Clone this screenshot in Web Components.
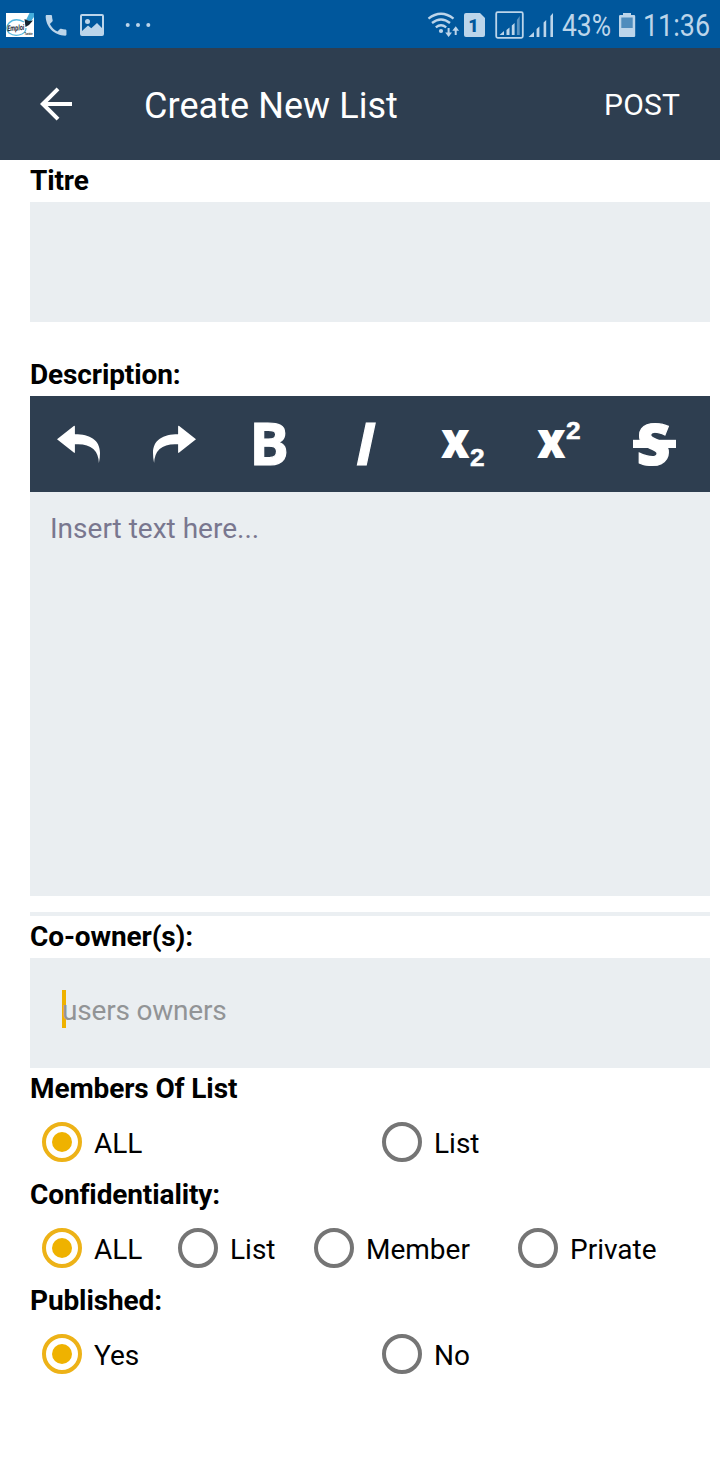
<!DOCTYPE html>
<html lang="en">
<head>
<meta charset="utf-8">
<title>Create New List</title>
<style>
body{margin:0;background:#fff;font-family:Roboto,"Noto Sans",sans-serif;color:#000}
</style>
</head>
<body>
<create-list-page></create-list-page>
<script>
const define = (name, html) => {
  const t = document.createElement('template');
  t.innerHTML = html;
  customElements.define(name, class extends HTMLElement {
    constructor(){ super(); this.attachShadow({mode:'open'}).append(t.content.cloneNode(true)); }
  });
};

define('status-bar', `
<style>
:host{display:flex;justify-content:space-between;height:48px;background:#00579c;overflow:hidden}
svg{display:block}
text{font-family:Roboto,sans-serif}
</style>
<svg width="160" height="48" viewBox="0 0 160 48">
  <rect x="6" y="13" width="28" height="24" fill="#fff"/>
  <path d="M24 22Q15 17 9 23Q4.500 28 9 33Q15 37 22 34Q26 32 26 28" fill="none" stroke="#55b7df" stroke-width="1.3"/>
  <path d="M26 20L29.500 13H34V17L29 24Z" fill="#45addb"/>
  <path d="M24.500 19L29 21L33 20.500L29 25L25.500 27Z" fill="#152532"/>
  <text x="7.500" y="31.300" font-size="8" font-weight="700" font-style="italic" fill="#182430" textLength="17" lengthAdjust="spacingAndGlyphs" transform="rotate(-5 8 31)">Emploi</text>
  <text x="24.500" y="35" font-size="3.500" font-weight="700" fill="#182430" textLength="8" lengthAdjust="spacingAndGlyphs">Tunisie</text>
  <g fill="#bcd5ea">
    <path transform="translate(42.2 11.5) scale(1.155)" d="M6.62 10.79c1.44 2.83 3.76 5.14 6.59 6.59l2.2-2.2c.27-.27.67-.36 1.02-.24 1.12.37 2.33.57 3.57.57.55 0 1 .45 1 1V20c0 .55-.45 1-1 1-9.39 0-17-7.61-17-17 0-.55.45-1 1-1h3.5c.55 0 1 .45 1 1 0 1.25.2 2.45.57 3.57.11.35.03.74-.25 1.02l-2.2 2.2z"/>
    <path fill-rule="evenodd" d="M82 14H102Q104 14 104 16V34Q104 36 102 36H82Q80 36 80 34V16Q80 14 82 14ZM82 16V31L88 25.6L91.3 28.3L97 23L102 28V16Z"/>
    <circle cx="87.5" cy="21.5" r="2.5"/>
    <circle cx="127.7" cy="25" r="2"/><circle cx="138" cy="25" r="2"/><circle cx="148.3" cy="25" r="2"/>
  </g>
</svg>
<svg width="300" height="48" viewBox="420 0 300 48" fill="#bcd5ea">
  <g fill="none" stroke="#bcd5ea" stroke-width="2.4">
    <path d="M428.5 18.6Q441 9 453.5 18.6"/><path d="M432 23Q441 16 450 23"/><path d="M435.8 27.4Q441 23.3 446.2 27.4"/>
    <path stroke-width="2" d="M448.6 28V35M455.7 35V28"/>
  </g>
  <circle cx="441" cy="31" r="2.1"/>
  <path d="M445.2 32.500H452L448.600 37ZM452.300 30.800H459.100L455.700 26.300Z"/>
  <path d="M466 13H480L485 18V35Q485 37 483 37H466Q464 37 464 35V15Q464 13 466 13Z"/>
  <text x="468.300" y="32.300" font-size="18" font-weight="900" fill="#00579c">1</text>
  <rect x="496.2" y="12.2" width="26.6" height="25.6" rx="1.500" fill="none" stroke="#bcd5ea" stroke-width="1.800"/>
  <path d="M499.500 35L504 31V35ZM506.500 30L509.500 27.500V35H506.500ZM511.800 25.500L514.600 23V35H511.800Z"/>
  <path opacity=".48" d="M516.900 20L519.700 16V35H516.900Z"/>
  <path d="M528.500 37L534 32V37ZM536.600 29L539.400 26.500V37H536.600ZM543.600 22.400L546.200 20V37H543.600ZM550.400 16L553 13V37H550.400Z"/>
  <text x="562" y="36" font-size="31" textLength="49" lengthAdjust="spacingAndGlyphs">43%</text>
  <path d="M623 13H631V15H634Q635.2 15 635.2 16.2V36Q635.2 37 634 37H620Q619 37 619 36V16.2Q619 15 620.2 15H623Z"/>
  <rect x="621.3" y="17.5" width="11.4" height="10.5" fill="#4f8dbd"/>
  <text x="643" y="36" font-size="31" textLength="67" lengthAdjust="spacingAndGlyphs">11:36</text>
</svg>`);

define('app-header', `
<style>
:host{display:flex;align-items:center;height:112px;background:#2e3e50;color:#fff;padding:0 40px;box-sizing:border-box}
svg{display:block;width:34px;height:34px;margin-right:70px}
h1{margin:0;flex:1;font:400 36px/42px Roboto,sans-serif;padding-top:3px;letter-spacing:.06px}
.action{font-size:30px;line-height:36px;padding-top:2px;letter-spacing:.15px}
</style>
<svg viewBox="0 0 34 34" fill="none" stroke="#fff" stroke-width="4"><path d="M18 1.800L2.800 17L18 32.200M2.800 17H32"/></svg>
<h1><slot></slot></h1>
<div class="action"><slot name="action"></slot></div>`);

define('field-label', `
<style>:host{display:block;height:42px;font-size:28px;line-height:41px;font-weight:700;white-space:nowrap;letter-spacing:-.12px}</style><slot></slot>`);

define('text-field', `
<style>
:host{display:flex;align-items:center;height:var(--field-height,120px);background:#eaeef1;padding:0 32px;box-sizing:border-box;color:#929496;font-size:28px}
.wrap{position:relative;line-height:38px;letter-spacing:-.2px}
:host([focused]) .wrap::before{content:"";position:absolute;left:0;top:0;width:4px;height:38px;background:#efb200}
span{position:relative;top:2px}
:host([focused]) .wrap{top:-4px}
</style>
<div class="wrap"><span><slot></slot></span></div>`);

define('editor-toolbar', `
<style>
:host{display:flex;height:96px;background:#2e3e50;overflow:hidden}
svg{display:block;flex:0 0 96px;width:96px;height:96px;fill:#fff;stroke:#fff;stroke-width:0}
text{font-family:"Open Sans","Noto Sans",sans-serif;font-weight:700}
.x{font-weight:800;font-size:49px}
.n{font-family:"Liberation Sans",sans-serif;font-size:23px;stroke-width:.5px}
.h{stroke-width:1.2px}
</style>
<svg viewBox="0 0 96 96"><path d="M27 43.3L43.8 30Q44.9 29.2 44.9 30.6V38.3C60 38.3 70 44 70 57Q70 62 68.9 67Q68 48.3 48 48.3H44.9V56Q44.9 57.4 43.8 56.6Z"/></svg>
<svg viewBox="0 0 96 96"><path transform="translate(97 0) scale(-1 1)" d="M27 43.3L43.8 30Q44.9 29.2 44.9 30.6V38.3C60 38.3 70 44 70 57Q70 62 68.9 67Q68 48.3 48 48.3H44.9V56Q44.9 57.4 43.8 56.6Z"/></svg>
<svg viewBox="0 0 96 96"><text class="h" x="27.600" y="69.400" font-size="58.600">B</text></svg>
<svg viewBox="0 0 96 96"><text class="h" x="38" y="69.400" font-size="58.600" font-style="italic">I</text></svg>
<svg viewBox="0 0 96 96"><text class="x" x="27" y="62" textLength="28.600" lengthAdjust="spacingAndGlyphs">x</text><text class="n" x="56" y="70" textLength="14.600" lengthAdjust="spacingAndGlyphs">2</text></svg>
<svg viewBox="0 0 96 96"><text class="x" x="27" y="62" textLength="28.600" lengthAdjust="spacingAndGlyphs">x</text><text class="n" x="56" y="43.300" textLength="14.600" lengthAdjust="spacingAndGlyphs">2</text></svg>
<svg viewBox="0 0 96 96"><text class="h" x="30.800" y="68.600" font-size="56.500" font-weight="800" style="font-weight:800" textLength="33.500" lengthAdjust="spacingAndGlyphs">S</text><rect x="27" y="43.800" width="43" height="8.200"/></svg>`);

define('rich-editor', `
<style>
:host{display:block}
.body{height:404px;background:#eaeef1;box-sizing:border-box;padding:18px 20px;font-size:28px;line-height:38px;color:#79778f}
.rule{height:4px;margin-top:16px;background:#ebeff2}
</style>
<editor-toolbar></editor-toolbar><div class="body"><slot></slot></div><div class="rule"></div>`);

define('radio-option', `
<style>
:host{display:flex;align-items:center;height:64px;box-sizing:border-box;padding-left:12px;font-size:28px;line-height:34px}
i{flex:none;box-sizing:border-box;width:40px;height:40px;border:4px solid #757575;border-radius:50%;margin-right:12px;display:grid;place-items:center}
:host([checked]) i{border-color:#edb217}
:host([checked]) i::after{content:"";width:20px;height:20px;border-radius:50%;background:#efb200}
span{padding-top:3px}
</style>
<i></i><span><slot></slot></span>`);

define('radio-row', `
<style>:host{display:grid;grid-template-columns:var(--columns,340px 340px)}</style><slot></slot>`);

define('create-list-page', `
<style>
:host{display:block;width:720px;height:1480px;background:#fff;overflow:hidden}
main{padding:0 10px 0 30px}
.title{margin-bottom:32px}
.owners{--field-height:110px}
.four{--columns:136px 136px 204px 204px}
</style>
<status-bar></status-bar>
<app-header>Create New List<span slot="action">POST</span></app-header>
<main>
  <field-label>Titre</field-label>
  <text-field class="title"></text-field>
  <field-label>Description:</field-label>
  <rich-editor>Insert text here...</rich-editor>
  <field-label>Co-owner(s):</field-label>
  <text-field class="owners" focused>users owners</text-field>
  <field-label>Members Of List</field-label>
  <radio-row><radio-option checked>ALL</radio-option><radio-option>List</radio-option></radio-row>
  <field-label>Confidentiality:</field-label>
  <radio-row class="four"><radio-option checked>ALL</radio-option><radio-option>List</radio-option><radio-option>Member</radio-option><radio-option>Private</radio-option></radio-row>
  <field-label>Published:</field-label>
  <radio-row><radio-option checked>Yes</radio-option><radio-option>No</radio-option></radio-row>
</main>`);
</script>
</body>
</html>
